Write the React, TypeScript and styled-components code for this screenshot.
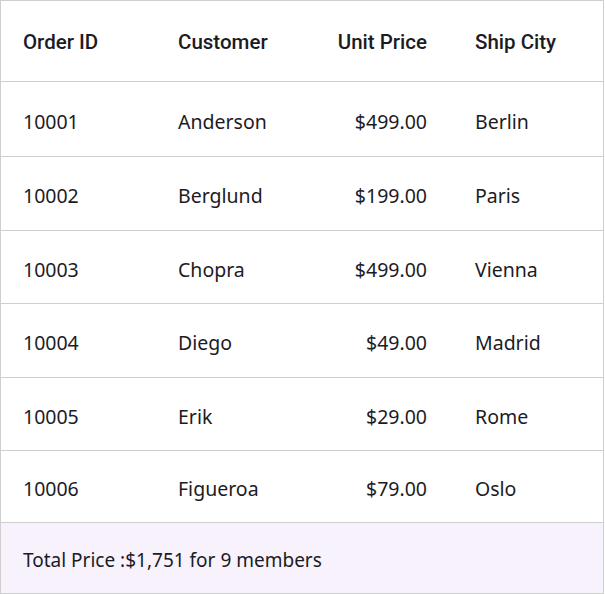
import styled, { createGlobalStyle } from 'styled-components';

const GlobalStyle = createGlobalStyle`
  html, body {
    margin: 0;
    padding: 0;
    background: #ffffff;
  }
`;

const Grid = styled.div`
  width: 604px;
  box-sizing: border-box;
  border: 1px solid #cfcfcf;
  display: flex;
  flex-direction: column;
`;

const Row = styled.div<{ $height: number }>`
  display: grid;
  grid-template-columns: 155px 148px 149px 150px;
  height: ${(p) => p.$height}px;
  box-sizing: border-box;
  border-bottom: 1px solid #cfcfcf;
  align-items: center;
`;

const HeaderCell = styled.div<{ $right?: boolean }>`
  padding: 2px 26px 0 22px;
  text-align: ${(p) => (p.$right ? 'right' : 'left')};
  font-family: Roboto, 'Liberation Sans', sans-serif;
  font-weight: 500;
  font-size: 20.5px;
  color: #1c1b1f;
`;

const Cell = styled.div<{ $right?: boolean }>`
  padding: 4px 26px 0 22px;
  text-align: ${(p) => (p.$right ? 'right' : 'left')};
  font-family: 'Noto Sans', 'Open Sans', sans-serif;
  font-size: 19.5px;
  color: #1c1b1f;
`;

const Footer = styled.div`
  height: 70px;
  background: #f7f2fc;
  display: flex;
  align-items: center;
  padding: 3px 22px 0;
  box-sizing: border-box;
  font-family: 'Noto Sans', 'Open Sans', sans-serif;
  font-size: 19px;
  color: #1c1b1f;
`;

const orders = [
  { id: 10001, customer: 'Anderson', price: '$499.00', city: 'Berlin' },
  { id: 10002, customer: 'Berglund', price: '$199.00', city: 'Paris' },
  { id: 10003, customer: 'Chopra', price: '$499.00', city: 'Vienna' },
  { id: 10004, customer: 'Diego', price: '$49.00', city: 'Madrid' },
  { id: 10005, customer: 'Erik', price: '$29.00', city: 'Rome' },
  { id: 10006, customer: 'Figueroa', price: '$79.00', city: 'Oslo' },
];

const heights = [75, 74, 73, 74, 73, 72];

const App = () => {
  return (
    <>
      <GlobalStyle />
      <Grid>
        <Row $height={81}>
          <HeaderCell>Order ID</HeaderCell>
          <HeaderCell>Customer</HeaderCell>
          <HeaderCell $right>Unit Price</HeaderCell>
          <HeaderCell>Ship City</HeaderCell>
        </Row>
        {orders.map((o, i) => (
          <Row $height={heights[i]} key={o.id}>
            <Cell>{o.id}</Cell>
            <Cell>{o.customer}</Cell>
            <Cell $right>{o.price}</Cell>
            <Cell>{o.city}</Cell>
          </Row>
        ))}
        <Footer>Total Price :$1,751 for 9 members</Footer>
      </Grid>
    </>
  );
};

export default App;
